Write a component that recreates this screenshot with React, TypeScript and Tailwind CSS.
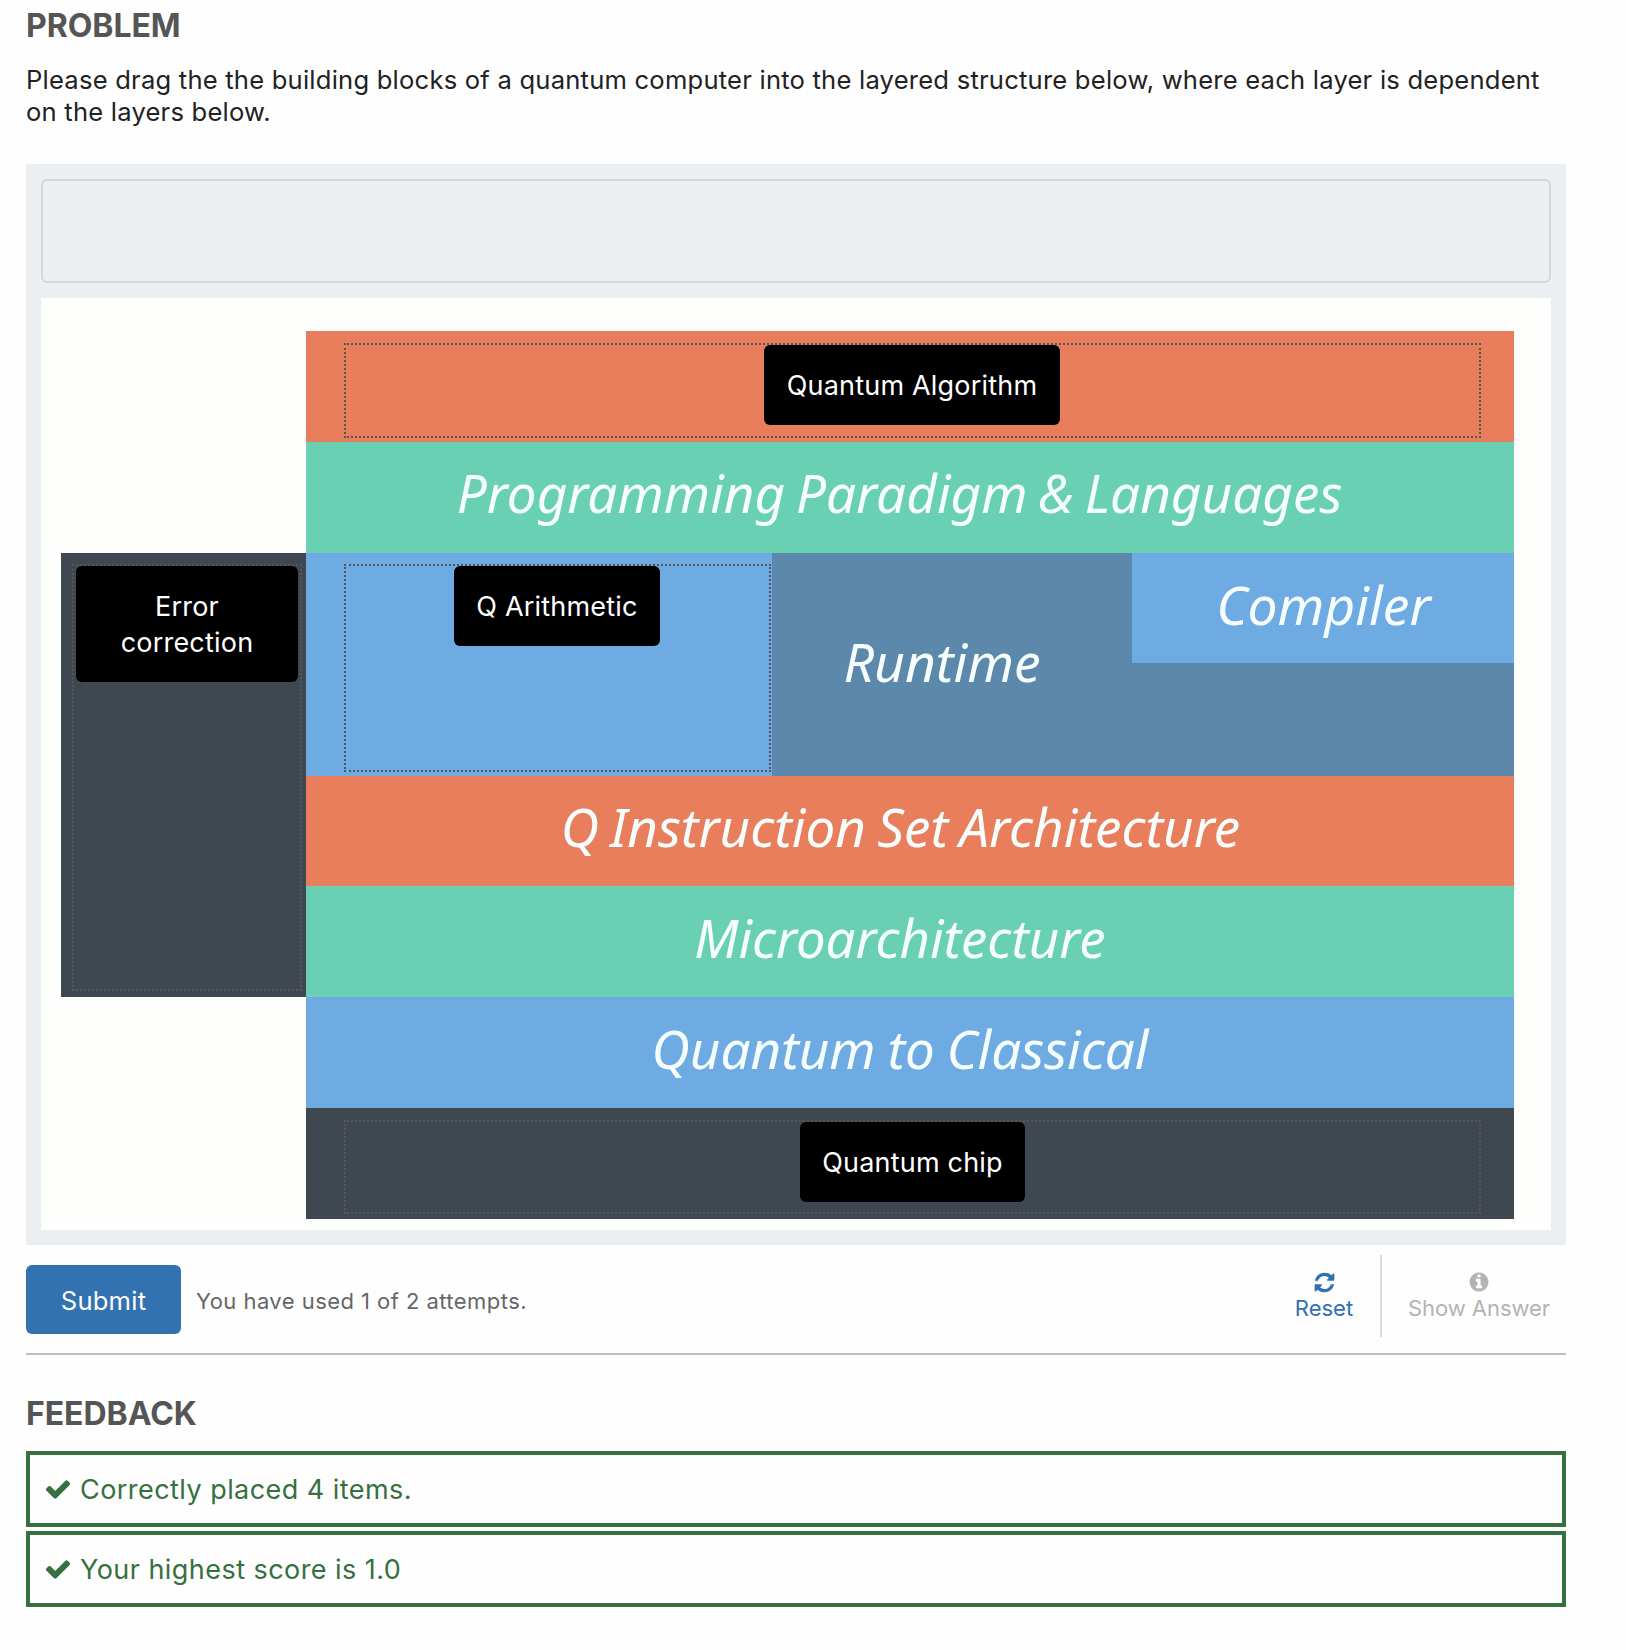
import type { ReactNode } from "react";

const CHECK =
  "M1671 566q0 40-28 68l-724 724-136 136q-28 28-68 28t-68-28l-136-136-362-362q-28-28-28-68t28-68l136-136q28-28 68-28t68 28l294 295 656-657q28-28 68-28t68 28l136 136q28 28 28 68z";
const REFRESH =
  "M1639 1056q0 5-1 7-64 268-268 434.5t-478 166.5q-146 0-282.5-55t-243.5-157l-129 129q-19 19-45 19t-45-19-19-45v-448q0-26 19-45t45-19h448q26 0 45 19t19 45-19 45l-137 137q71 66 161 102t187 36q134 0 250-65t186-179q11-17 53-117 8-23 30-23h192q13 0 22.5 9.5t9.5 22.5zm25-800v448q0 26-19 45t-45 19h-448q-26 0-45-19t-19-45 19-45l138-138q-148-137-349-137-134 0-250 65t-186 179q-11 17-53 117-8 23-30 23h-199q-13 0-22.5-9.5t-9.5-22.5v-7q65-268 270-434.5t480-166.5q146 0 284 55.5t245 156.5l130-129q19-19 45-19t45 19 19 45z";
const INFO =
  "M1152 1376v-160q0-14-9-23t-23-9h-96v-512q0-14-9-23t-23-9h-320q-14 0-23 9t-9 23v160q0 14 9 23t23 9h96v320h-96q-14 0-23 9t-9 23v160q0 14 9 23t23 9h448q14 0 23-9t9-23zm-128-896v-160q0-14-9-23t-23-9h-192q-14 0-23 9t-9 23v160q0 14 9 23t23 9h192q14 0 23-9t9-23zm640 416q0 209-103 385.5t-279.5 279.5-385.5 103-385.5-103-279.5-279.5-103-385.5 103-385.5 279.5-279.5 385.5-103 385.5 103 279.5 279.5 103 385.5z";

function Icon({ path, className }: { path: string; className: string }) {
  return (
    <svg viewBox="0 0 1792 1792" fill="currentColor" className={className} aria-hidden="true">
      <path d={path} />
    </svg>
  );
}

function DropZone({ className, children }: { className: string; children: ReactNode }) {
  return (
    <div className={`flex items-start justify-center border-2 border-dotted border-[#565656] ${className}`}>
      {children}
    </div>
  );
}

function Item({ className, children }: { className: string; children: ReactNode }) {
  return (
    <div
      className={`shrink-0 rounded-[6px] bg-black pt-[23px] pb-[21px] text-center text-[27px] leading-[36px] tracking-[0.2px] whitespace-nowrap text-white ${className}`}
    >
      {children}
    </div>
  );
}

function Label({ className, children }: { className: string; children: ReactNode }) {
  return (
    <span
      className={`inline-block font-['Noto_Sans','Open_Sans',sans-serif] text-[52px] leading-[70px] whitespace-nowrap text-[#f6fefd] italic ${className}`}
    >
      {children}
    </span>
  );
}

function Feedback({ children }: { children: ReactNode }) {
  return (
    <div className="flex h-[76px] items-center border-4 border-[#36703e] pl-[14px] text-[27px] tracking-[0.45px] text-[#36703e]">
      <Icon path={CHECK} className="mr-[8px] size-[28px]" />
      <span className="pt-[2px]">{children}</span>
    </div>
  );
}

export default function App() {
  return (
    <main className="h-[1650px] w-[1626px] overflow-hidden bg-[#fefefe] pl-[26px] font-['Inter',sans-serif]">
      <div className="w-[1540px]">
        <h2 className="h-[64px] pt-[6px] text-[32px] leading-[40px] font-bold tracking-[-0.05px] text-[#555]">PROBLEM</h2>
        <p className="h-[100px] text-[25.6px] leading-[32px] tracking-[0.21px] text-[#222]">
          Please drag the the building blocks of a quantum computer into the layered structure below, where each layer is dependent
          <br />
          on the layers below.
        </p>

        <section className="bg-[#ebeff2] p-[15px]">
          <div className="h-[104px] rounded-[6px] border-2 border-[#d4d7d8]" />
          <div className="mt-[15px] flex h-[932px] bg-[#fefefd] pt-[33px] pl-[20px]">
            <div className="mt-[222px] h-[444px] w-[245px] bg-[#3f4850] pt-[11px] pl-[11px]">
              <DropZone className="h-[427px] w-[230px]">
                <Item className="w-[222px]">
                  Error
                  <br />
                  correction
                </Item>
              </DropZone>
            </div>
            <div className="w-[1208px]">
              <div className="h-[111px] bg-[#e97e5c] pt-[12px] pl-[38px]">
                <DropZone className="h-[95px] w-[1137px]">
                  <Item className="mr-px w-[296px]">Quantum Algorithm</Item>
                </DropZone>
              </div>
              <div className="flex h-[111px] justify-center bg-[#69d0b4] pt-[16px] pr-[20px]">
                <Label className="scale-x-[1.019] [word-spacing:-3px]">Programming Paradigm &amp; Languages</Label>
              </div>
              <div className="flex h-[223px]">
                <div className="w-[466px] bg-[#6eabe3] pt-[11px] pl-[38px]">
                  <DropZone className="h-[208px] w-[427px]">
                    <Item className="mr-px w-[206px]">Q Arithmetic</Item>
                  </DropZone>
                </div>
                <div className="flex w-[360px] justify-center bg-[#5c88ab] pt-[74px] pr-[20px]">
                  <Label className="scale-x-[1.027]">Runtime</Label>
                </div>
                <div className="w-[382px] bg-[#5c88ab]">
                  <div className="flex h-[110px] justify-center bg-[#6eabe3] pt-[17px]">
                    <Label className="scale-x-[1.027]">Compiler</Label>
                  </div>
                </div>
              </div>
              <div className="flex h-[110px] justify-center bg-[#e97e5c] pt-[16px] pr-[20px]">
                <Label className="scale-x-[1.019] [word-spacing:-2.5px]">Q Instruction Set Architecture</Label>
              </div>
              <div className="flex h-[111px] justify-center bg-[#69d0b4] pt-[17px] pr-[20px]">
                <Label className="scale-x-[1.014]">Microarchitecture</Label>
              </div>
              <div className="flex h-[111px] justify-center bg-[#6eabe3] pt-[17px] pr-[20px]">
                <Label className="scale-x-[1.018] [word-spacing:-2px]">Quantum to Classical</Label>
              </div>
              <div className="h-[111px] bg-[#3f4850] pt-[12px] pl-[38px]">
                <DropZone className="h-[94px] w-[1137px]">
                  <Item className="w-[225px]">Quantum chip</Item>
                </DropZone>
              </div>
            </div>
          </div>
        </section>

        <div className="flex h-[110px] border-b-2 border-[#bdbdbd] pt-[10px]">
          <button className="mt-[10px] h-[69px] w-[155px] rounded-[6px] bg-[#3272b1] pt-[4px] text-[25.6px] tracking-[0.2px] text-[#fefefe]">Submit</button>
          <span className="mt-[30px] ml-[15px] text-[22px] leading-[32px] tracking-[0.45px] text-[#666]">You have used 1 of 2 attempts.</span>
          <div className="ml-auto flex h-[82px]">
            <div className="flex w-[113px] flex-col items-center border-r-2 border-[#dadada] pt-[15.5px] pr-px text-[#3070b3]">
              <Icon path={REFRESH} className="mb-[0.5px] size-[23px]" />
              <span className="text-[22px] leading-[28px]">Reset</span>
            </div>
            <div className="flex w-[184px] flex-col items-center pt-[16px] pl-[10px] text-[#b3b3b3]">
              <Icon path={INFO} className="size-[22px]" />
              <span className="mt-px text-[22px] leading-[28px] tracking-[-0.05px]">Show Answer</span>
            </div>
          </div>
        </div>

        <h2 className="h-[96px] pt-[39px] text-[32px] leading-[40px] font-bold tracking-[-0.05px] text-[#555]">FEEDBACK</h2>
        <div className="flex flex-col gap-1">
          <Feedback>Correctly placed 4 items.</Feedback>
          <Feedback>Your highest score is 1.0</Feedback>
        </div>
      </div>
    </main>
  );
}
